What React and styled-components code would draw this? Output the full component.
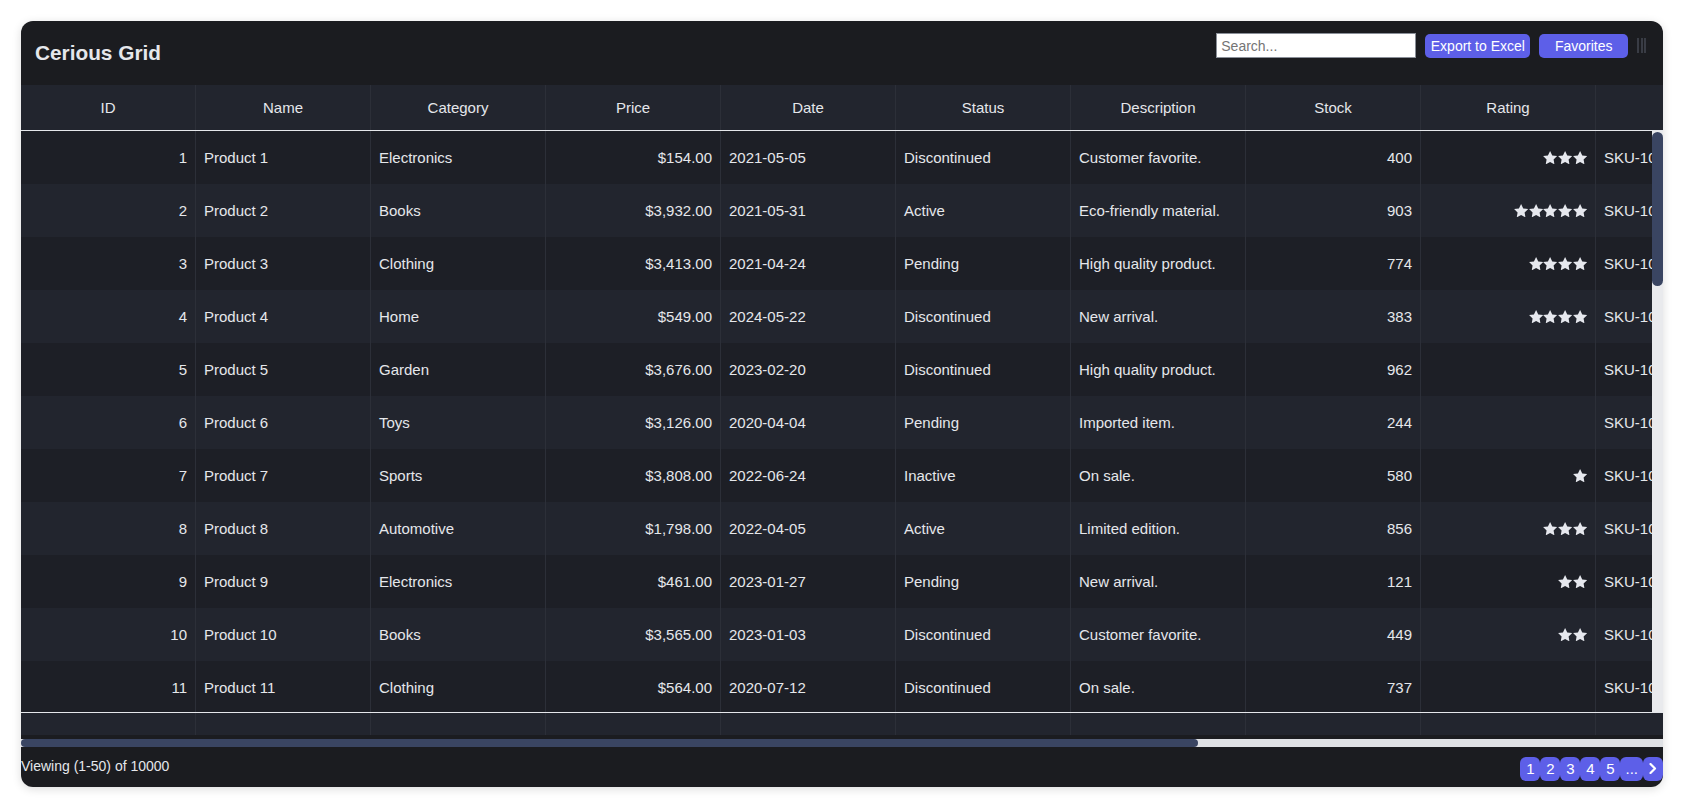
import React from "react";
import styled, { createGlobalStyle } from "styled-components";

const GlobalStyle = createGlobalStyle`
  html, body { margin: 0; padding: 0; background: #ffffff; }
  body { font-family: "Liberation Sans", Arial, Helvetica, sans-serif; }
  * { box-sizing: border-box; }
`;

const COL_W = 175;
const TOTAL_COLUMNS = 13;
const ACCENT = "#5d5fe8";

const columns = [
  { key: "id", label: "ID", align: "right" },
  { key: "name", label: "Name", align: "left" },
  { key: "category", label: "Category", align: "left" },
  { key: "price", label: "Price", align: "right" },
  { key: "date", label: "Date", align: "left" },
  { key: "status", label: "Status", align: "left" },
  { key: "description", label: "Description", align: "left" },
  { key: "stock", label: "Stock", align: "right" },
  { key: "rating", label: "Rating", align: "right" },
  { key: "sku", label: "", align: "left" },
];

const raw = [
  ["Electronics", "$154.00", "2021-05-05", "Discontinued", "Customer favorite.", 400, 3],
  ["Books", "$3,932.00", "2021-05-31", "Active", "Eco-friendly material.", 903, 5],
  ["Clothing", "$3,413.00", "2021-04-24", "Pending", "High quality product.", 774, 4],
  ["Home", "$549.00", "2024-05-22", "Discontinued", "New arrival.", 383, 4],
  ["Garden", "$3,676.00", "2023-02-20", "Discontinued", "High quality product.", 962, 0],
  ["Toys", "$3,126.00", "2020-04-04", "Pending", "Imported item.", 244, 0],
  ["Sports", "$3,808.00", "2022-06-24", "Inactive", "On sale.", 580, 1],
  ["Automotive", "$1,798.00", "2022-04-05", "Active", "Limited edition.", 856, 3],
  ["Electronics", "$461.00", "2023-01-27", "Pending", "New arrival.", 121, 2],
  ["Books", "$3,565.00", "2023-01-03", "Discontinued", "Customer favorite.", 449, 2],
  ["Clothing", "$564.00", "2020-07-12", "Discontinued", "On sale.", 737, 0],
];

const rows = raw.map((r, i) => ({
  id: i + 1,
  name: `Product ${i + 1}`,
  category: r[0],
  price: r[1],
  date: r[2],
  status: r[3],
  description: r[4],
  stock: r[5],
  rating: r[6],
  sku: "SKU-10",
}));

const Page = styled.div`
  padding: 21px 21px 0 21px;
  height: 804px;
`;

const Grid = styled.div`
  height: 766px;
  display: flex;
  flex-direction: column;
  background: #1b1c20;
  border-radius: 12px;
  overflow: hidden;
  box-shadow: 0 2px 10px rgba(0, 0, 0, 0.14);
  color: #e5e7eb;
`;

const TitleBar = styled.div`
  height: 64px;
  flex: 0 0 64px;
  display: flex;
  align-items: center;
  justify-content: space-between;
  padding: 0 17px 0 14px;
`;

const Title = styled.h1`
  margin: 0;
  font-size: 20.8px;
  font-weight: 700;
  color: #e5e7eb;
`;

const Toolbar = styled.div`
  align-self: flex-start;
  margin-top: 12px;
  display: flex;
  align-items: center;
  gap: 9px;
`;

const SearchInput = styled.input`
  width: 200px;
  height: 25px;
  border: 1px solid #8a8f98;
  background: #ffffff;
  padding: 0 4px;
  font-family: inherit;
  font-size: 14px;
  color: #222;
  outline: none;
  &::placeholder { color: #757575; }
`;

const ActionButton = styled.button`
  height: 24px;
  padding: 0 ${(p) => (p.$wide ? "15.5px" : "5.5px")};
  border: none;
  border-radius: 5px;
  background: ${ACCENT};
  color: #ffffff;
  font-family: inherit;
  font-size: 14px;
  cursor: pointer;
`;

const DragHandle = styled.div`
  display: flex;
  gap: 1.5px;
  height: 15px;
`;

const HandleBar = styled.span`
  width: 2px;
  height: 100%;
  background: #393c45;
`;

const HeaderRow = styled.div`
  flex: 0 0 46px;
  display: flex;
  overflow: hidden;
  background: #22252e;
  border-bottom: 1px solid #e5e7eb;
`;

const HeaderCell = styled.div`
  flex: 0 0 ${COL_W}px;
  display: flex;
  align-items: center;
  justify-content: center;
  border-right: 1px solid #2c2f38;
  font-size: 15px;
  color: #e5e7eb;
`;

const BodyArea = styled.div`
  flex: 0 0 581px;
  display: flex;
  overflow: hidden;
`;

const BodyViewport = styled.div`
  flex: 1;
  overflow: hidden;
`;

const Row = styled.div`
  display: flex;
  height: 53px;
  background: ${(p) => (p.$odd ? "#1d1f26" : "#22252e")};
`;

const Cell = styled.div`
  flex: 0 0 ${COL_W}px;
  display: flex;
  align-items: center;
  justify-content: ${(p) => (p.$align === "right" ? "flex-end" : "flex-start")};
  padding: 0 8px;
  border-right: 1px solid #2c2f38;
  font-size: 15px;
  white-space: nowrap;
  color: #e5e7eb;
`;

const VScrollTrack = styled.div`
  flex: 0 0 11px;
  background: #e9eaed;
  padding-top: 1px;
  position: relative;
  z-index: 1;
`;

const VScrollThumb = styled.div`
  height: 154px;
  background: #3a4562;
  border-radius: 6px;
`;

const SummaryRow = styled.div`
  flex: 0 0 23px;
  display: flex;
  overflow: hidden;
  background: #22252e;
  border-top: 1px solid #e5e7eb;
`;

const SummaryCell = styled.div`
  flex: 0 0 ${COL_W}px;
  border-right: 1px solid #2c2f38;
`;

const HScrollTrack = styled.div`
  flex: 0 0 8px;
  margin-top: 4px;
  background: #dfe1e5;
  display: flex;
`;

const HScrollThumb = styled.div`
  height: 100%;
  background: #3a4562;
  border-radius: 4px;
`;

const Footer = styled.div`
  flex: 1;
  display: flex;
  align-items: center;
  justify-content: space-between;
  padding-top: 3px;
`;

const Info = styled.div`
  font-size: 14px;
  color: #e5e7eb;
  margin-top: -5px;
`;

const Pager = styled.div`
  display: flex;
  align-items: center;
`;

const PageButton = styled.button`
  min-width: 20px;
  height: 24px;
  padding: 0 5px;
  border: none;
  border-radius: 6px;
  background: ${ACCENT};
  color: #ffffff;
  font-family: inherit;
  font-size: 15px;
  display: flex;
  align-items: center;
  justify-content: center;
  cursor: pointer;
`;

const StarRow = styled.span`
  display: inline-flex;
  gap: 0.5px;
`;

const Star = () => (
  <svg width="14.2" height="13.4" viewBox="2 2 20 19.1" aria-hidden="true">
    <polygon
      fill="#e6e8ee"
      points="12,2 15.09,8.26 22,9.27 17,14.14 18.18,21.02 12,17.77 5.82,21.02 7,14.14 2,9.27 8.91,8.26"
    />
  </svg>
);

const Stars = ({ count }) => (
  <StarRow>
    {Array.from({ length: count }).map((_, i) => (
      <Star key={i} />
    ))}
  </StarRow>
);

const Chevron = () => (
  <svg width="8" height="11" viewBox="0 0 8 11" aria-hidden="true">
    <polyline points="1.5,1 6,5.5 1.5,10" fill="none" stroke="#ffffff" strokeWidth="2.2" strokeLinecap="round" strokeLinejoin="round" />
  </svg>
);

export default function App() {
  const contentWidth = TOTAL_COLUMNS * COL_W;
  const thumbPct = (1631 / contentWidth) * 100;
  return (
    <>
      <GlobalStyle />
      <Page>
        <Grid>
          <TitleBar>
            <Title>Cerious Grid</Title>
            <Toolbar>
              <SearchInput placeholder="Search..." />
              <ActionButton>Export to Excel</ActionButton>
              <ActionButton $wide>Favorites</ActionButton>
              <DragHandle>
                <HandleBar />
                <HandleBar />
                <HandleBar />
              </DragHandle>
            </Toolbar>
          </TitleBar>

          <HeaderRow>
            {columns.map((c) => (
              <HeaderCell key={c.key}>{c.label}</HeaderCell>
            ))}
          </HeaderRow>

          <BodyArea>
            <BodyViewport>
              {rows.map((r, i) => (
                <Row key={r.id} $odd={i % 2 === 0}>
                  {columns.map((c) => (
                    <Cell key={c.key} $align={c.align}>
                      {c.key === "rating" ? <Stars count={r.rating} /> : r[c.key]}
                    </Cell>
                  ))}
                </Row>
              ))}
            </BodyViewport>
            <VScrollTrack>
              <VScrollThumb />
            </VScrollTrack>
          </BodyArea>

          <SummaryRow>
            {columns.map((c) => (
              <SummaryCell key={c.key} />
            ))}
          </SummaryRow>

          <HScrollTrack>
            <HScrollThumb style={{ width: `${thumbPct}%` }} />
          </HScrollTrack>

          <Footer>
            <Info>Viewing (1-50) of 10000</Info>
            <Pager>
              {["1", "2", "3", "4", "5", "..."].map((p) => (
                <PageButton key={p}>{p}</PageButton>
              ))}
              <PageButton aria-label="Next page">
                <Chevron />
              </PageButton>
            </Pager>
          </Footer>
        </Grid>
      </Page>
    </>
  );
}
